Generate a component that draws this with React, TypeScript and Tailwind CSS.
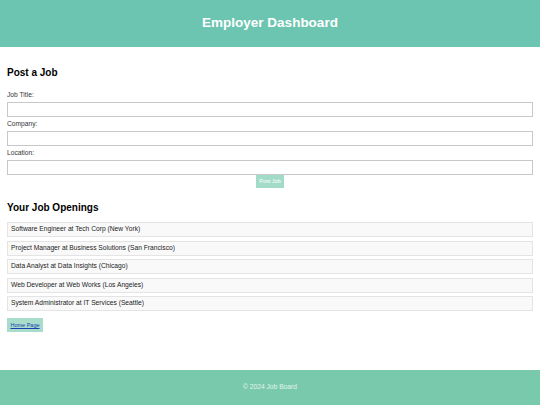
const openings = [
  "Software Engineer at Tech Corp (New York)",
  "Project Manager at Business Solutions (San Francisco)",
  "Data Analyst at Data Insights (Chicago)",
  "Web Developer at Web Works (Los Angeles)",
  "System Administrator at IT Services (Seattle)",
];

const fields = ["Job Title:", "Company:", "Location:"];

export default function App() {
  return (
    <div className="flex min-h-screen flex-col bg-white font-['Liberation_Sans',Arial,sans-serif] text-[#222]">
      <header className="flex h-[47px] items-center justify-center bg-[#6cc5b0]">
        <h1 className="text-[13.5px] font-bold text-white">Employer Dashboard</h1>
      </header>

      <main className="flex-1 px-[7px]">
        <h2 className="mt-[20px] text-[10px] font-bold leading-[12px] text-black">
          Post a Job
        </h2>

        <form className="mt-[12px] flex flex-col">
          {fields.map((label, i) => (
            <div key={label} className="flex flex-col">
              <label className="text-[6.7px] leading-[8px] text-[#333]">{label}</label>
              <input
                type="text"
                className={
                  i < fields.length - 1
                    ? "mt-[3px] mb-[3px] h-[15px] w-full border border-[#c8c8c8] bg-white"
                    : "mt-[3px] h-[15px] w-full border border-[#c8c8c8] bg-white"
                }
              />
            </div>
          ))}
          <div className="flex justify-center">
            <button
              type="button"
              className="h-[13px] w-[28px] bg-[#a2dcc9] text-[5.5px] text-white"
            >
              Post Job
            </button>
          </div>
        </form>

        <h2 className="mt-[14px] text-[10px] font-bold leading-[12px] text-black">
          Your Job Openings
        </h2>

        <ul className="mt-[8px] flex flex-col gap-[3.5px]">
          {openings.map((job) => (
            <li
              key={job}
              className="flex h-[15px] items-center border border-[#e4e4e4] bg-[#f9f9f9] px-[3px] text-[6.7px] text-[#222]"
            >
              {job}
            </li>
          ))}
        </ul>

        <div className="mt-[7px] flex">
          <a
            href="#"
            className="flex h-[14px] w-[36px] items-center justify-center bg-[#a8dccb] text-[5.5px] text-[#1a3fb0] underline"
          >
            Home Page
          </a>
        </div>
      </main>

      <footer className="flex h-[35px] items-center justify-center bg-[#79c9ad]">
        <p className="text-[6.7px] text-[#e4f4ee]">© 2024 Job Board</p>
      </footer>
    </div>
  );
}
